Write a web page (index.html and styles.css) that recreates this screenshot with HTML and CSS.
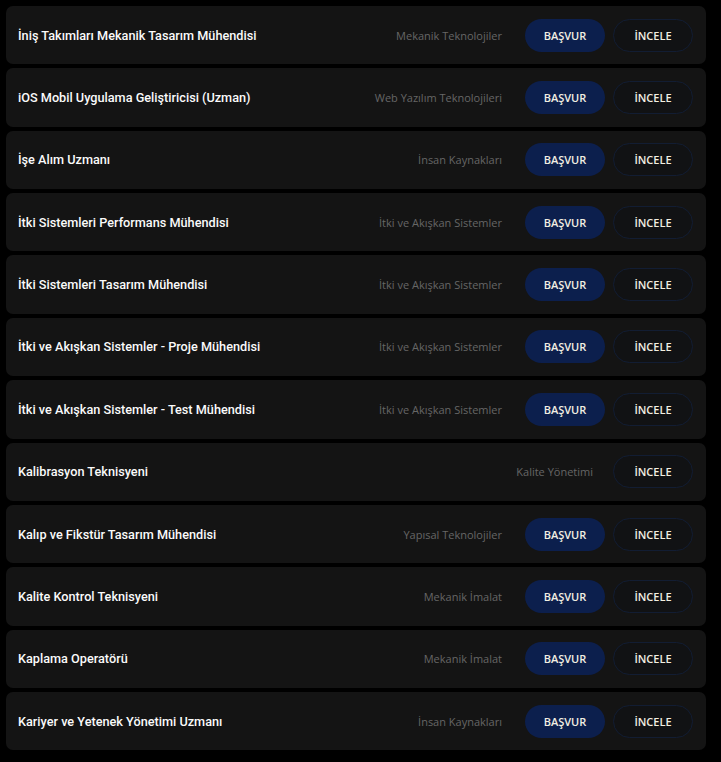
FILE: index.html
```html
<!DOCTYPE html>
<html lang="tr">
<head>
<meta charset="utf-8">
<link rel="stylesheet" href="styles.css">
</head>
<body>
<div class="list">
  <div class="job"><div class="title">İniş Takımları Mekanik Tasarım Mühendisi</div><div class="cat">Mekanik Teknolojiler</div><div class="actions"><a class="btn apply">BAŞVUR</a><a class="btn view">İNCELE</a></div></div>
  <div class="job"><div class="title">iOS Mobil Uygulama Geliştiricisi (Uzman)</div><div class="cat">Web Yazılım Teknolojileri</div><div class="actions"><a class="btn apply">BAŞVUR</a><a class="btn view">İNCELE</a></div></div>
  <div class="job"><div class="title">İşe Alım Uzmanı</div><div class="cat">İnsan Kaynakları</div><div class="actions"><a class="btn apply">BAŞVUR</a><a class="btn view">İNCELE</a></div></div>
  <div class="job"><div class="title">İtki Sistemleri Performans Mühendisi</div><div class="cat">İtki ve Akışkan Sistemler</div><div class="actions"><a class="btn apply">BAŞVUR</a><a class="btn view">İNCELE</a></div></div>
  <div class="job"><div class="title">İtki Sistemleri Tasarım Mühendisi</div><div class="cat">İtki ve Akışkan Sistemler</div><div class="actions"><a class="btn apply">BAŞVUR</a><a class="btn view">İNCELE</a></div></div>
  <div class="job"><div class="title">İtki ve Akışkan Sistemler - Proje Mühendisi</div><div class="cat">İtki ve Akışkan Sistemler</div><div class="actions"><a class="btn apply">BAŞVUR</a><a class="btn view">İNCELE</a></div></div>
  <div class="job"><div class="title">İtki ve Akışkan Sistemler - Test Mühendisi</div><div class="cat">İtki ve Akışkan Sistemler</div><div class="actions"><a class="btn apply">BAŞVUR</a><a class="btn view">İNCELE</a></div></div>
  <div class="job"><div class="title">Kalibrasyon Teknisyeni</div><div class="cat cat-single">Kalite Yönetimi</div><div class="actions"><a class="btn view">İNCELE</a></div></div>
  <div class="job"><div class="title">Kalıp ve Fikstür Tasarım Mühendisi</div><div class="cat">Yapısal Teknolojiler</div><div class="actions"><a class="btn apply">BAŞVUR</a><a class="btn view">İNCELE</a></div></div>
  <div class="job"><div class="title">Kalite Kontrol Teknisyeni</div><div class="cat">Mekanik İmalat</div><div class="actions"><a class="btn apply">BAŞVUR</a><a class="btn view">İNCELE</a></div></div>
  <div class="job"><div class="title">Kaplama Operatörü</div><div class="cat">Mekanik İmalat</div><div class="actions"><a class="btn apply">BAŞVUR</a><a class="btn view">İNCELE</a></div></div>
  <div class="job"><div class="title">Kariyer ve Yetenek Yönetimi Uzmanı</div><div class="cat">İnsan Kaynakları</div><div class="actions"><a class="btn apply">BAŞVUR</a><a class="btn view">İNCELE</a></div></div>
</div>
</body>
</html>
```

FILE: styles.css
```css
html, body {
  margin: 0;
  padding: 0;
  background: #000;
}
body {
  padding: 6px 15px 0 6px;
}
.list {
  display: flex;
  flex-direction: column;
  gap: 4px;
  width: 700px;
}
.job {
  display: flex;
  align-items: center;
  height: 58.36px;
  box-sizing: border-box;
  padding: 0 13px 0 12px;
  background: #141414;
  border-radius: 7px;
}
.title {
  flex: 1;
  font-family: Roboto, "Liberation Sans", sans-serif;
  font-size: 12.7px;
  font-weight: 500;
  color: #fafafa;
}
.cat {
  font-family: "Open Sans", "Liberation Sans", sans-serif;
  font-size: 11px;
  color: #666;
  margin-right: 23px;
}
.cat-single {
  margin-right: 20px;
}
.actions {
  display: flex;
  gap: 8px;
}
.btn {
  display: flex;
  align-items: center;
  justify-content: center;
  width: 80px;
  height: 33px;
  box-sizing: border-box;
  border-radius: 17px;
  font-family: "Open Sans", "Liberation Sans", sans-serif;
  font-size: 11px;
  font-weight: 600;
  color: #f2efe2;
}
.apply {
  background: #0c1f4d;
}
.view {
  border: 1px solid #121d33;
  background: #111214;
}
```
